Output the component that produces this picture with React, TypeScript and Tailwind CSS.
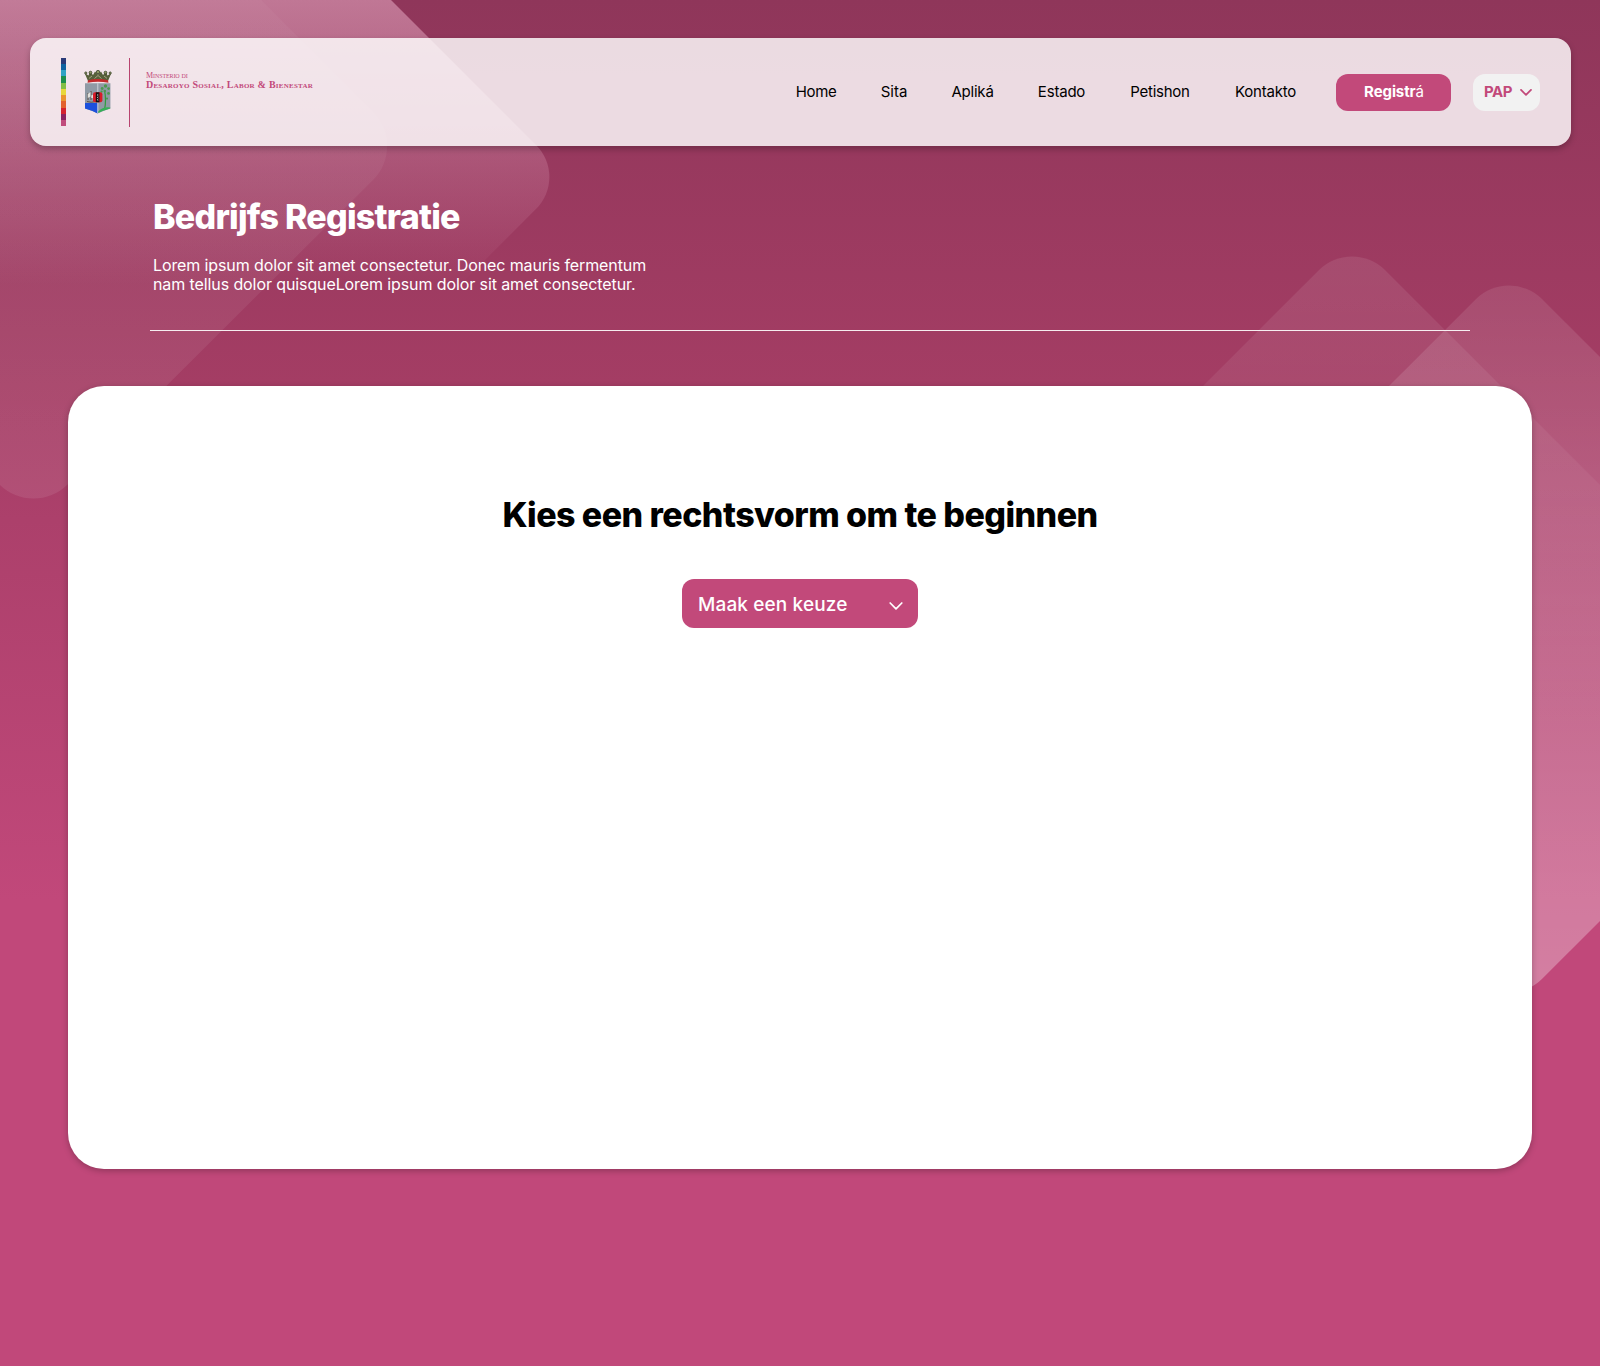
const STRIPES = [
  "bg-[#2b3a78]", "bg-[#0f62a0]", "bg-[#2fa3c4]", "bg-[#1c8f4c]", "bg-[#83bf45]", "bg-[#e8d83c]",
  "bg-[#ea9430]", "bg-[#e2622e]", "bg-[#d42230]", "bg-[#8b2260]", "bg-[#c04c7c]",
];

const NAV = [
  { label: "Home", cls: "w-[40px] tracking-[-0.35px]" },
  { label: "Sita", cls: "w-[26px] tracking-[0px]" },
  { label: "Apliká", cls: "w-[41px] tracking-[-0.2px]" },
  { label: "Estado", cls: "w-[47px] tracking-[-0.2px]" },
  { label: "Petishon", cls: "w-[60px] tracking-[-0.25px]" },
  { label: "Kontakto", cls: "w-[61px] tracking-[-0.2px]" },
];

function Backdrop() {
  return (
    <svg className="absolute inset-0" width="1600" height="1366" viewBox="0 0 1600 1366" fill="none" aria-hidden="true">
      <defs>
        <linearGradient id="ga" gradientUnits="userSpaceOnUse" x1="0" y1="0" x2="0" y2="285">
          <stop offset="0" stopColor="#f1b8d0" stopOpacity="0.5" />
          <stop offset="1" stopColor="#f1b8d0" stopOpacity="0" />
        </linearGradient>
        <linearGradient id="gb" gradientUnits="userSpaceOnUse" x1="0" y1="0" x2="0" y2="499">
          <stop offset="0" stopColor="#fff" stopOpacity="0.03" />
          <stop offset="1" stopColor="#fff" stopOpacity="0.085" />
        </linearGradient>
        <linearGradient id="gc" gradientUnits="userSpaceOnUse" x1="0" y1="256" x2="0" y2="735">
          <stop offset="0" stopColor="#fff" stopOpacity="0.09" />
          <stop offset="1" stopColor="#fff" stopOpacity="0" />
        </linearGradient>
        <linearGradient id="gd" gradientUnits="userSpaceOnUse" x1="0" y1="285" x2="0" y2="990">
          <stop offset="0" stopColor="#fff" stopOpacity="0.09" />
          <stop offset="1" stopColor="#fff" stopOpacity="0.3" />
        </linearGradient>
      </defs>
      <path d="M-178 177 L163 -164 Q195 -196 227 -164 L536.2 145.2 A45 45 0 0 1 536.2 208.8 L227 518 Q195 550 163 518 Z" fill="url(#ga)" />
      <path d="M-339 146 L34 -227 L373 112 A48 48 0 0 1 373 180 L67 485 A48 48 0 0 1 0 485 Z" fill="url(#gb)" />
      <path d="M979 610 L1318.8 270.2 A47 47 0 0 1 1385.2 270.2 L1725 610 L1352 983 Z" fill="url(#gc)" />
      <path d="M1136 639 L1475.8 299.2 A47 47 0 0 1 1542.2 299.2 L1882 639 L1542.2 978.8 A47 47 0 0 1 1475.8 978.8 Z" fill="url(#gd)" />
    </svg>
  );
}

function Crest() {
  return (
    <svg width="28" height="44" viewBox="0 0 28 44" aria-hidden="true">
      <path d="M4 11 L0.6 3 L4.5 5.5 L6 1.8 L9 5 L11 1.5 L14 4.5 L17 1.5 L19 5 L22 1.8 L23.5 5.5 L27.4 3 L24 11 Z" fill="#56603a" />
      <g fill="#8d9a63" stroke="#2e3320" strokeWidth="0.7">
        <circle cx="1.8" cy="3" r="1.1" />
        <circle cx="6.5" cy="2.6" r="1.4" />
        <circle cx="14" cy="2" r="1.7" />
        <circle cx="21.5" cy="2.6" r="1.4" />
        <circle cx="26.2" cy="3" r="1.1" />
      </g>
      <path d="M5 8.4 L8 6 M10.5 8.5 L14 5.5 L17.5 8.5 M20 6 L23 8.4" stroke="#c9bd9f" strokeWidth="0.7" fill="none" />
      <path d="M4 10.2 Q14 7.6 24 10.2 L24.5 12.8 Q14 10.6 3.5 12.8 Z" fill="#c22a2c" />
      <path d="M1 13.3 H26.4 V38.5 Q20 40.5 13.6 43.6 Q8 40.5 1 38.5 Z" fill="#909aa5" />
      <path d="M1 33 H13.6 V43.4 Q8 40.5 1 38.5 Z" fill="#1c50dc" />
      <path d="M13.8 13.3 V43.4" stroke="#dce0e6" strokeWidth="0.8" />
      <path d="M3 31.5 Q7 33 12 31.5 M4 30 V23 M7 30 V21 M9.5 30 V24" stroke="#5b4a3c" strokeWidth="0.9" fill="none" />
      <path d="M3.8 24 L6.5 22 V26.5 L3.8 28 Z M7.3 25.5 L9.5 24.5 V28 H7.3 Z" fill="#e2e1dc" />
      <path d="M20.5 40 Q22.5 30 20.5 20" stroke="#2e9c3c" strokeWidth="1.2" fill="none" />
      <g fill="#4a9a50">
        <circle cx="18.2" cy="18.5" r="1.4" />
        <circle cx="21.5" cy="16" r="1.7" />
        <circle cx="24.6" cy="18.6" r="1.4" />
        <circle cx="17.6" cy="21.6" r="1.1" />
        <circle cx="24.5" cy="23.4" r="1.4" />
        <circle cx="20.8" cy="21" r="1.3" />
        <circle cx="23" cy="28.6" r="1.1" />
      </g>
      <path d="M14.3 41.5 Q19 36.5 26.2 37.5 L26.2 38.6 Q20 40.4 14.3 43 Z" fill="#35b058" />
      <rect x="9" y="22.3" width="9.4" height="10" rx="2" fill="#d81c28" />
      <rect x="11.8" y="22.3" width="3.6" height="10" fill="#15100f" />
      <path d="M13 24.4 L14.4 25.6 M14.4 24.4 L13 25.6 M13 26.8 L14.4 28 M14.4 26.8 L13 28 M13 29.2 L14.4 30.4 M14.4 29.2 L13 30.4" stroke="#fff" strokeWidth="0.5" />
    </svg>
  );
}

function Chevron({ className, w, h, stroke }: { className: string; w: number; h: number; stroke: number }) {
  return (
    <svg className={className} width={w} height={h} viewBox="0 0 14 8" fill="none" aria-hidden="true">
      <path d="M1.2 1 L7 6.8 L12.8 1" stroke="currentColor" strokeWidth={stroke} strokeLinecap="round" strokeLinejoin="round" />
    </svg>
  );
}

function Header() {
  return (
    <header className="flex h-[108px] w-[1541px] items-center rounded-2xl bg-white/[0.82] pl-[31px] pr-[31px] shadow-[0_3px_6px_rgba(0,0,0,0.25)]">
      <div className="flex h-[69px] w-[5px] flex-col">
        {STRIPES.map((c) => (
          <div key={c} className={`flex-1 ${c}`} />
        ))}
      </div>
      <div className="ml-[18px]">
        <Crest />
      </div>
      <div className="ml-[17px] h-[69px] w-px bg-[#b8436f]" />
      <div className="mb-[23px] ml-[16px] whitespace-nowrap font-['Liberation_Serif'] text-[#c2497a]">
        <div className="text-[8px] leading-[9px] tracking-[-0.1px] [font-variant:small-caps]">Minsterio di</div>
        <div className="text-[10px] font-bold leading-[10px] tracking-[0.24px] [font-variant:small-caps]">Desaroyo Sosial, Labor &amp; Bienestar</div>
      </div>
      <nav className="ml-auto flex gap-[45px] text-[15px] leading-5 text-black">
        {NAV.map((n) => (
          <a key={n.label} className={`flex justify-center whitespace-nowrap ${n.cls}`}>{n.label}</a>
        ))}
      </nav>
      <button className="ml-10 flex h-[37px] w-[115px] items-center justify-center rounded-xl bg-[#c2497a] pl-px text-[15px] font-bold tracking-[-0.1px] text-white">
        Registr<span className="font-normal">á</span>
      </button>
      <button className="ml-[22px] flex h-[37px] w-[67px] items-center rounded-xl bg-[#f2f2f2] pl-[11px] text-[15px] font-bold tracking-[-0.5px] text-[#c2497a]">
        <span className="w-[28px]">PAP</span>
        <Chevron className="ml-[8px] mt-px" w={12} h={7} stroke={2.1} />
      </button>
    </header>
  );
}

export default function App() {
  return (
    <div className="relative h-[1366px] w-[1600px] overflow-hidden bg-[linear-gradient(180deg,#8f365a_0px,#a43d64_386px,#ac406b_520px,#c1487a_900px,#c1487a_1366px)] font-['Inter',sans-serif]">
      <Backdrop />
      <div className="relative pl-[30px] pt-[38px]">
        <Header />
        <section className="ml-[120px] mt-[44px] h-[141px] w-[1320px] border-b border-white/90 pl-[3px] text-white">
          <h1 className="whitespace-nowrap text-[34px] font-extrabold leading-[53px] tracking-[-0.75px]">Bedrijfs Registratie</h1>
          <p className="mt-[13px] whitespace-nowrap text-[16px] leading-[19px]">
            <span className="block tracking-[-0.11px]">Lorem ipsum dolor sit amet consectetur. Donec mauris fermentum</span>
            <span className="block tracking-[-0.1px]">nam tellus dolor quisqueLorem ipsum dolor sit amet consectetur.</span>
          </p>
        </section>
        <main className="ml-[38px] mt-[55px] flex h-[783px] w-[1464px] flex-col items-center rounded-[36px] bg-white pt-[102px] shadow-[0_2px_6px_rgba(0,0,0,0.25)]">
          <h2 className="whitespace-nowrap text-[34px] font-extrabold leading-[53px] tracking-[-0.55px] text-black">Kies een rechtsvorm om te beginnen</h2>
          <button className="mt-[38px] flex h-[49px] w-[236px] items-center justify-between rounded-xl bg-[#c2497a] pl-4 pr-[15px] text-[19px] font-medium tracking-[0.13px] text-white">
            <span className="mt-[3px] whitespace-nowrap">Maak een keuze</span>
            <Chevron className="mt-[5px]" w={14} h={8} stroke={1.7} />
          </button>
        </main>
      </div>
    </div>
  );
}
